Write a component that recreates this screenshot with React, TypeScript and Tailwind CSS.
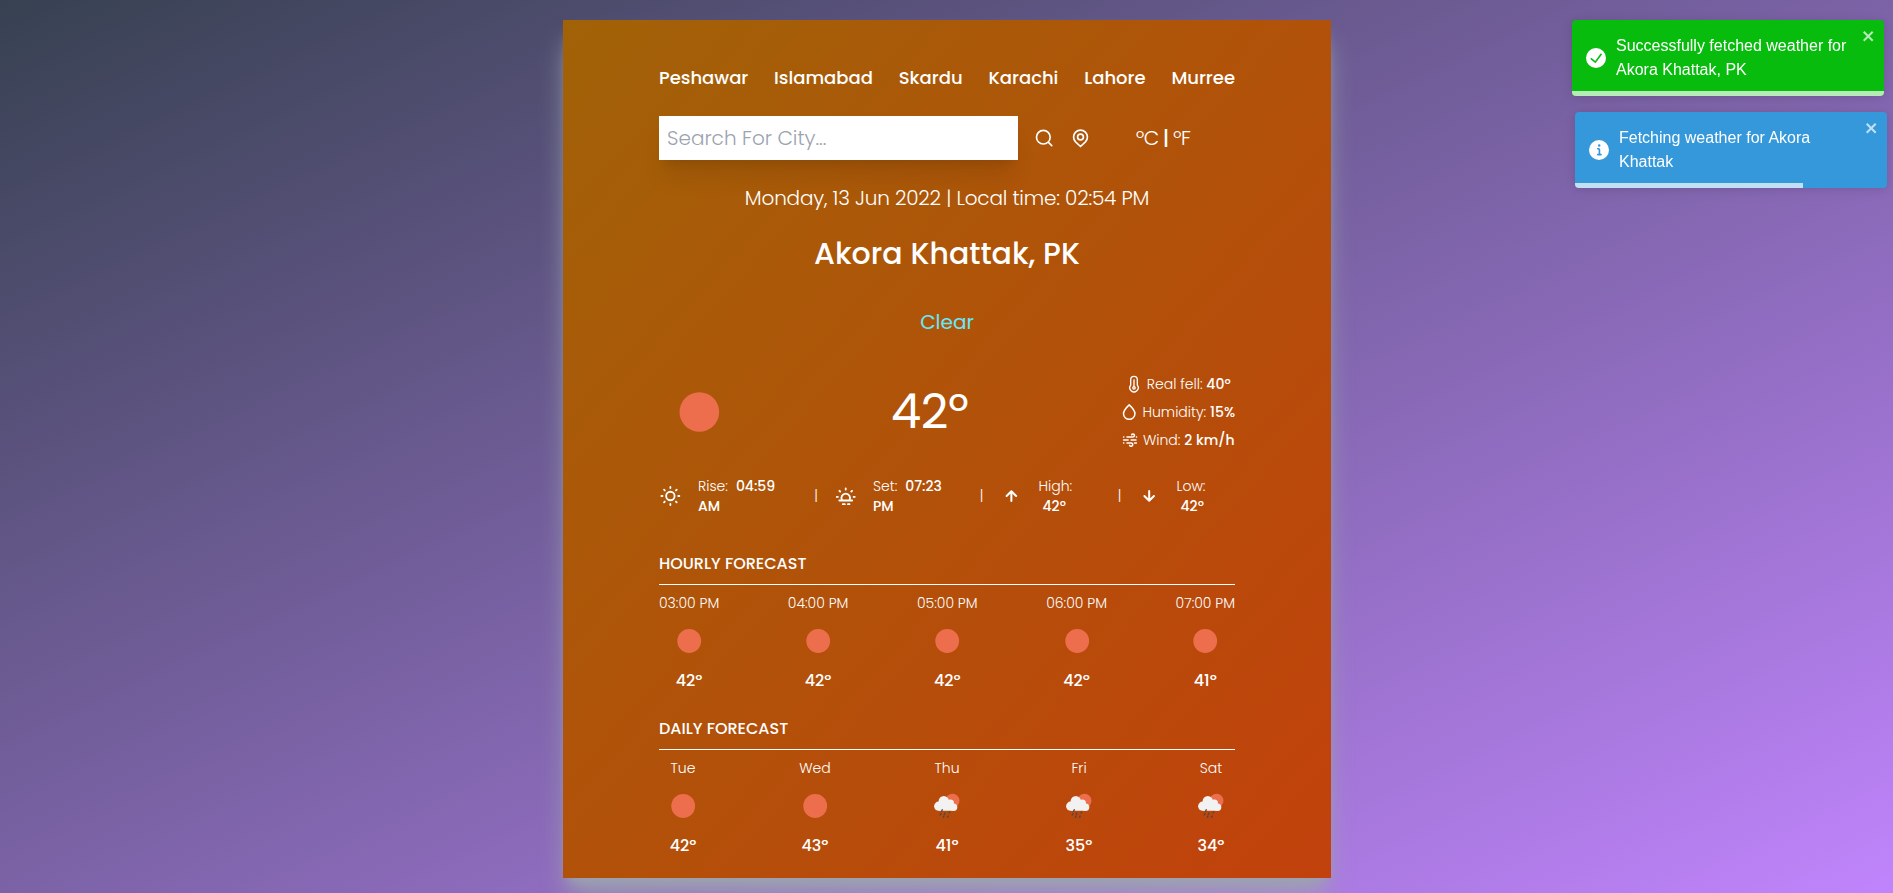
import type { ReactNode } from "react";

const cities = ["Peshawar", "Islamabad", "Skardu", "Karachi", "Lahore", "Murree"];

type Sky = "sun" | "rain";
type Slot = { label: string; sky: Sky; temp: string };

const hourly: Slot[] = [
  { label: "03:00 PM", sky: "sun", temp: "42º" },
  { label: "04:00 PM", sky: "sun", temp: "42º" },
  { label: "05:00 PM", sky: "sun", temp: "42º" },
  { label: "06:00 PM", sky: "sun", temp: "42º" },
  { label: "07:00 PM", sky: "sun", temp: "41º" },
];

const daily: Slot[] = [
  { label: "Tue", sky: "sun", temp: "42º" },
  { label: "Wed", sky: "sun", temp: "43º" },
  { label: "Thu", sky: "rain", temp: "41º" },
  { label: "Fri", sky: "rain", temp: "35º" },
  { label: "Sat", sky: "rain", temp: "34º" },
];

function Line({ size, children, width = 2 }: { size: number; children: ReactNode; width?: number }) {
  return (
    <svg
      width={size}
      height={size}
      viewBox="0 0 24 24"
      fill="none"
      stroke="currentColor"
      strokeWidth={width}
      strokeLinecap="round"
      strokeLinejoin="round"
      className="shrink-0"
    >
      {children}
    </svg>
  );
}

const SearchIcon = () => (
  <Line size={20}>
    <circle cx="11.2" cy="11" r="8.2" />
    <path d="M17.400 17.200 21.300 21.100" />
  </Line>
);

const PinIcon = () => (
  <Line size={20}>
    <path d="M18.500 16.600 12.600 22.200 6.700 16.600a8.300 8.300 0 1 1 11.800 0z" />
    <circle cx="12.600" cy="10.800" r="3.500" />
  </Line>
);

const ThermometerIcon = () => (
  <Line size={18} width={1.8}>
    <path d="M7.6 13.4V6.2a4.4 4.4 0 0 1 8.8 0v7.2a5.6 5.6 0 1 1-8.8 0z" />
    <path d="M12 6.4v9" />
    <circle cx="12" cy="17" r="1.6" />
  </Line>
);

const DropIcon = () => (
  <Line size={18}>
    <path d="M12.300 2.500C8.500 6 4.700 10 4.700 14.200a7.600 7.600 0 0 0 15.200 0C19.900 10 16.100 6 12.300 2.500z" />
  </Line>
);

const WindIcon = () => (
  <Line size={18}>
    <path d="M3.500 8h.3M8 8h8a2 2 0 1 0-1.800-3M20.500 8h.3" />
    <path d="M3.500 12h6M13.500 12h6.500" />
    <path d="M3.500 16h.3M8 16h5.500a2.200 2.200 0 1 1-2 3.200M18 16h2.500" />
  </Line>
);

const SunIcon = () => (
  <Line size={22}>
    <circle cx="12.4" cy="12" r="4.600" />
    <path d="M12.400 2.200v1.200M12.400 20.600v1.200M2.600 12h1.200M21 12h1.200M5.500 5.100l.8.8M18.500 18.100l.8.8M5.500 18.900l.8-.8M18.500 5.900l.8-.8" />
  </Line>
);

const SunsetIcon = () => (
  <Line size={22}>
    <path d="M8.700 16.400a4.700 4.700 0 1 1 8.200 0" />
    <path d="M5.800 16.900h14M9.600 20.900h2.200M15.200 20.900h1.700" />
    <path d="M12.800 3.700v1.200M3 13h1.200M21.400 13h1.200M5.900 6.300l.8.8M18.900 7.100l.8-.8" />
  </Line>
);

const ArrowUpIcon = () => (
  <Line size={22} width={2.2}>
    <path d="M12.400 17.500V6.800M7.200 12l5.200-5.200 5.200 5.200" />
  </Line>
);

const ArrowDownIcon = () => (
  <Line size={22} width={2.2}>
    <path d="M12.200 6.500V17.200M7 12l5.200 5.200L17.400 12" />
  </Line>
);

function SkyIcon({ sky, size }: { sky: Sky; size: number }) {
  return (
    <svg width={size} height={size} viewBox="0 0 48 48" className="shrink-0">
      {sky === "sun" ? (
        <circle cx="24.200" cy="24" r="11.900" fill="#ec6e4c" />
      ) : (
        <>
          <circle cx="29.500" cy="18.700" r="7" fill="#ec6e4c" />
          <g fill="#f2f2f2">
            <circle cx="15.700" cy="24.200" r="4.600" />
            <circle cx="20.800" cy="19.200" r="5.200" />
            <circle cx="27.300" cy="21.300" r="3.700" />
            <circle cx="30.600" cy="25.200" r="3.700" />
            <path d="M15.700 20h12l3 8.800H15.700z" />
          </g>
          <g stroke="#48484a" strokeWidth="1.300" strokeLinecap="round">
            <path d="M19.200 27.700l-.5 1.500M26.500 30l-.5 1M22 31l-.8 1.500M18 31.500l-.8 1.500M25.200 34l-.5 1.300M21 34l-.5 1.300" />
          </g>
        </>
      )}
    </svg>
  );
}

function Forecast({ title, slots, columnClass }: { title: string; slots: Slot[]; columnClass: string }) {
  return (
    <section>
      <h2 className="text-base font-medium uppercase">{title}</h2>
      <hr className="my-2 border-white" />
      <div className="flex justify-between">
        {slots.map((slot) => (
          <div key={slot.label} className={`flex flex-col items-center ${columnClass}`}>
            <p className="text-sm font-light whitespace-nowrap">{slot.label}</p>
            <div className="my-1">
              <SkyIcon sky={slot.sky} size={48} />
            </div>
            <p className="font-medium">{slot.temp}</p>
          </div>
        ))}
      </div>
    </section>
  );
}

function Toast({
  color,
  offset,
  icon,
  progress,
  children,
}: {
  color: string;
  offset: string;
  icon: string;
  progress: string;
  children: ReactNode;
}) {
  return (
    <div
      className={`relative flex h-[76px] w-[312px] overflow-hidden rounded-[4px] px-3.5 py-3.5 shadow-[0_1px_10px_rgba(0,0,0,0.1),0_2px_15px_rgba(0,0,0,0.05)] ${color} ${offset}`}
    >
      <svg viewBox="0 0 24 24" width="20" height="20" fill="#fff" className="mr-2.5 shrink-0 self-center">
        <path d={icon} />
      </svg>
      <p className="w-[236px] self-center font-['Liberation_Sans',Arial,sans-serif] text-base">{children}</p>
      <svg
        viewBox="0 0 14 16"
        width="14"
        height="16"
        fill="#fff"
        fillOpacity="0.7"
        className="absolute top-2 right-2"
      >
        <path
          fillRule="evenodd"
          d="M7.710 8.230l3.750 3.750-1.480 1.480-3.750-3.750-3.750 3.750L1 11.980l3.750-3.750L1 4.480 2.480 3l3.750 3.750L9.980 3l1.480 1.480-3.750 3.750z"
        />
      </svg>
      <div className={`absolute bottom-0 left-0 h-[5px] bg-white/70 ${progress}`} />
    </div>
  );
}

const CHECK =
  "M12 0a12 12 0 1012 12A12.014 12.014 0 0012 0zm6.927 8.2l-6.845 9.289a1.011 1.011 0 01-1.43.188l-4.888-3.908a1 1 0 111.25-1.562l4.076 3.261 6.227-8.451a1 1 0 111.61 1.183z";
const INFO =
  "M12 0a12 12 0 1012 12A12.013 12.013 0 0012 0zm.25 5a1.5 1.5 0 11-1.5 1.5 1.5 1.5 0 011.5-1.5zm2.25 13.5h-4a1 1 0 010-2h.75a.25.25 0 00.25-.25v-4.5a.25.25 0 00-.25-.25h-.75a1 1 0 010-2h1a2 2 0 012 2v4.75a.25.25 0 00.25.25h.75a1 1 0 110 2z";

const Divider = () => <span className="w-1.5 shrink-0 text-center font-light">|</span>;

export default function App() {
  return (
    <div className="h-[893px] overflow-hidden bg-linear-to-br/srgb from-[#374151] to-[#c084fc] pt-5 pl-px font-['Poppins',Inter,sans-serif] text-white">
      <main className="mx-auto h-[858px] w-3xl bg-linear-to-br/srgb from-[#a16207] to-[#c2410c] px-24 py-5 shadow-[0_20px_25px_-5px_#9ca3af,0_8px_10px_-6px_#9ca3af]">
        <nav className="my-6 flex justify-between text-lg font-medium">
          {cities.map((city) => (
            <button key={city}>{city}</button>
          ))}
        </nav>

        <div className="flex">
          <div className="flex w-3/4 items-center gap-4">
            <input
              type="text"
              placeholder="Search For City..."
              className="h-11 w-[359px] shrink-0 bg-white p-2 text-xl font-light text-gray-700 shadow-xl placeholder:text-[#9ca3af]"
            />
            <SearchIcon />
            <PinIcon />
          </div>
          <div className="flex w-1/4 items-center justify-center text-xl font-light">
            <span className="tracking-[-0.5px]">ºC</span>
            <span className="mx-1 font-medium">|</span>
            <span className="tracking-[-0.6px]">ºF</span>
          </div>
        </div>

        <p className="mt-6 text-center text-xl font-light tracking-[-0.19px]">
          Monday, 13 Jun 2022 | Local time: 02:54 PM
        </p>
        <h1 className="mt-6 text-center text-3xl font-medium">Akora Khattak, PK</h1>
        <p className="mt-9 text-center text-xl text-[#67e8f9]">Clear</p>

        <div className="mt-9 flex items-center justify-between">
          <SkyIcon sky="sun" size={80} />
          <p className="text-5xl tracking-[-0.5px]">42º</p>
          <div className="flex flex-col gap-2 text-sm font-light whitespace-nowrap">
            <div className="flex items-center justify-center gap-1">
              <ThermometerIcon />
              <p>
                Real fell: <span className="font-medium">40º</span>
              </p>
            </div>
            <div className="flex items-center justify-center gap-1">
              <DropIcon />
              <p>
                Humidity: <span className="font-medium">15%</span>
              </p>
            </div>
            <div className="flex items-center justify-center gap-1">
              <WindIcon />
              <p>
                Wind: <span className="font-medium">2 km/h</span>
              </p>
            </div>
          </div>
        </div>

        <div className="mt-6 flex items-center text-sm font-light">
          <div className="flex w-[154px] items-center gap-[17px]">
            <SunIcon />
            <div className="w-[84px]">
              <p className="flex gap-2">
                Rise: <span className="font-medium">04:59</span>
              </p>
              <p className="font-medium">AM</p>
            </div>
          </div>
          <Divider />
          <div className="flex w-[159.5px] items-center gap-[17px] pl-[15px]">
            <SunsetIcon />
            <div className="w-[84px]">
              <p className="flex gap-2">
                Set: <span className="font-medium">07:23</span>
              </p>
              <p className="font-medium">PM</p>
            </div>
          </div>
          <Divider />
          <div className="flex w-[132px] items-center gap-[16.5px] pl-[15.5px]">
            <ArrowUpIcon />
            <div>
              <p>High:</p>
              <p className="ml-1 font-medium">42º</p>
            </div>
          </div>
          <Divider />
          <div className="flex items-center gap-[16.5px] pl-[15.5px]">
            <ArrowDownIcon />
            <div>
              <p>Low:</p>
              <p className="ml-1 font-medium">42º</p>
            </div>
          </div>
        </div>

        <div className="mt-9 flex flex-col gap-6">
          <Forecast title="Hourly Forecast" slots={hourly} columnClass="" />
          <Forecast title="Daily Forecast" slots={daily} columnClass="w-12" />
        </div>
      </main>

      <div className="fixed top-5 right-0 flex w-[321px] flex-col gap-4">
        <Toast color="bg-[#07bc0c]" offset="" icon={CHECK} progress="w-full">
          Successfully fetched weather for Akora Khattak, PK
        </Toast>
        <Toast color="bg-[#3498db]" offset="ml-[3px]" icon={INFO} progress="w-[228px]">
          Fetching weather for Akora Khattak
        </Toast>
      </div>
    </div>
  );
}
